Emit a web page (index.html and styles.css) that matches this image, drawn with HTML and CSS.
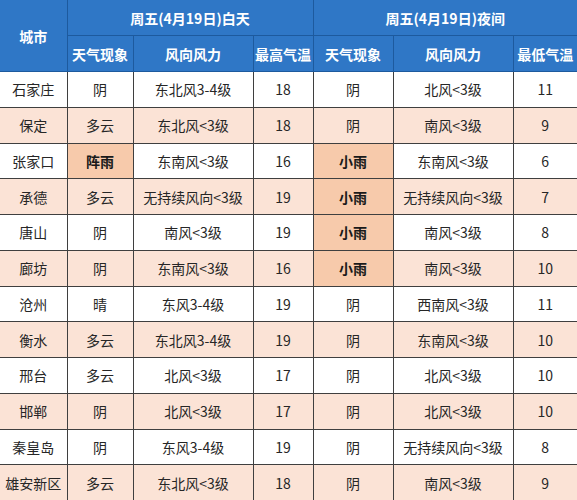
FILE: index.html
```html
<!DOCTYPE html>
<html lang="zh">
<head>
<meta charset="utf-8">
<link rel="stylesheet" href="styles.css">
</head>
<body>
<table class="wx">
  <colgroup>
    <col class="c-city"><col class="c-w1"><col class="c-d1"><col class="c-t1">
    <col class="c-w2"><col class="c-d2"><col class="c-t2">
  </colgroup>
  <thead>
    <tr class="h1">
      <th rowspan="2">城市</th>
      <th colspan="3">周五(4月19日)白天</th>
      <th colspan="3">周五(4月19日)夜间</th>
    </tr>
    <tr class="h2">
      <th>天气现象</th><th>风向风力</th><th>最高气温</th>
      <th>天气现象</th><th>风向风力</th><th>最低气温</th>
    </tr>
  </thead>
  <tbody>
    <tr><td>石家庄</td><td>阴</td><td>东北风3-4级</td><td>18</td><td>阴</td><td>北风&lt;3级</td><td>11</td></tr>
    <tr class="alt"><td>保定</td><td>多云</td><td>东北风&lt;3级</td><td>18</td><td>阴</td><td>南风&lt;3级</td><td>9</td></tr>
    <tr><td>张家口</td><td class="hl">阵雨</td><td>东南风&lt;3级</td><td>16</td><td class="hl">小雨</td><td>东南风&lt;3级</td><td>6</td></tr>
    <tr class="alt"><td>承德</td><td>多云</td><td>无持续风向&lt;3级</td><td>19</td><td class="hl">小雨</td><td>无持续风向&lt;3级</td><td>7</td></tr>
    <tr><td>唐山</td><td>阴</td><td>南风&lt;3级</td><td>19</td><td class="hl">小雨</td><td>南风&lt;3级</td><td>8</td></tr>
    <tr class="alt"><td>廊坊</td><td>阴</td><td>东南风&lt;3级</td><td>16</td><td class="hl">小雨</td><td>南风&lt;3级</td><td>10</td></tr>
    <tr><td>沧州</td><td>晴</td><td>东风3-4级</td><td>19</td><td>阴</td><td>西南风&lt;3级</td><td>11</td></tr>
    <tr class="alt"><td>衡水</td><td>多云</td><td>东北风3-4级</td><td>19</td><td>阴</td><td>东南风&lt;3级</td><td>10</td></tr>
    <tr><td>邢台</td><td>多云</td><td>北风&lt;3级</td><td>17</td><td>阴</td><td>北风&lt;3级</td><td>10</td></tr>
    <tr class="alt"><td>邯郸</td><td>阴</td><td>北风&lt;3级</td><td>17</td><td>阴</td><td>北风&lt;3级</td><td>10</td></tr>
    <tr><td>秦皇岛</td><td>阴</td><td>东风3-4级</td><td>19</td><td>阴</td><td>无持续风向&lt;3级</td><td>8</td></tr>
    <tr class="alt"><td>雄安新区</td><td>多云</td><td>东北风&lt;3级</td><td>18</td><td>阴</td><td>南风&lt;3级</td><td>9</td></tr>
  </tbody>
</table>
</body>
</html>
```
FILE: styles.css
```css
html, body {
  margin: 0;
  padding: 0;
  background: #ffffff;
}

.wx {
  width: 577px;
  height: 500px;
  border-collapse: collapse;
  table-layout: fixed;
  border-style: hidden;
  font-family: "Noto Sans CJK SC", "Noto Sans", sans-serif;
  font-size: 14px;
  color: #262626;
}

.c-city { width: 67px; }
.c-w1 { width: 66px; }
.c-d1 { width: 120px; }
.c-t1 { width: 60px; }
.c-w2 { width: 80px; }
.c-d2 { width: 120px; }
.c-t2 { width: 64px; }

.wx th {
  background: #2f77c6;
  color: #ffffff;
  font-weight: bold;
  border: 1px solid #1d5a9e;
  height: 35px;
  padding: 0;
  text-align: center;
  vertical-align: middle;
  line-height: 1;
}

.wx td {
  border: 1px solid #3f3f3f;
  height: 34.7px;
  padding: 0;
  text-align: center;
  vertical-align: middle;
  white-space: nowrap;
  line-height: 1;
}

.wx tbody tr:last-child td {
  border-bottom: 1px solid #3f3f3f;
}

.wx tr.alt td {
  background: #fbe3d6;
}

.wx td.hl,
.wx tr.alt td.hl {
  background: #f7caab;
  font-weight: bold;
  color: #1a1a1a;
}
```
